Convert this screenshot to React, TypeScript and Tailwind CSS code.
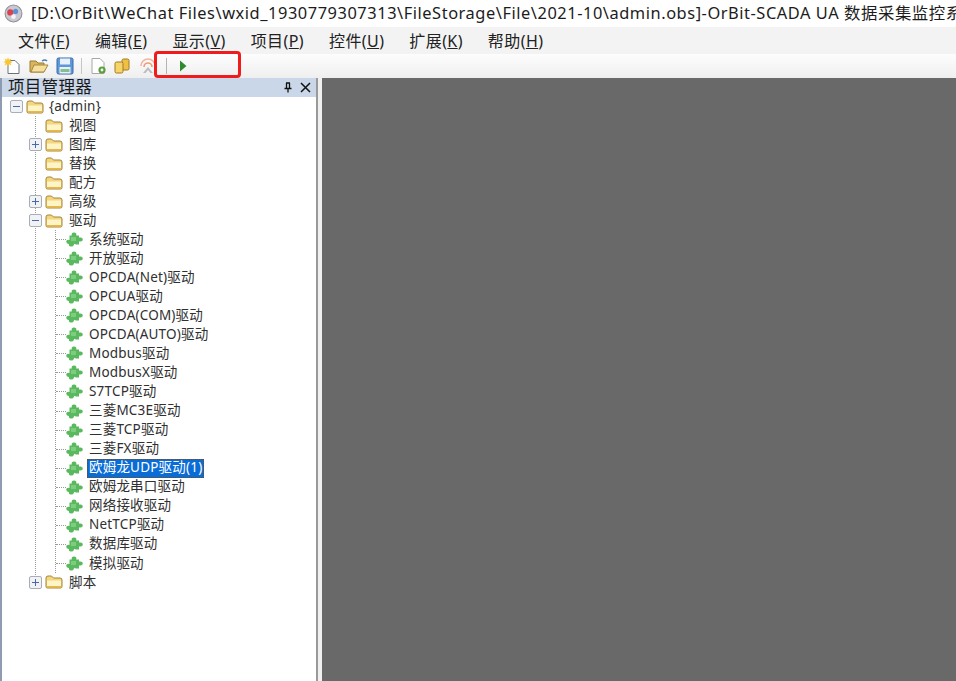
const FONT = "font-['Noto_Sans','Noto_Sans_CJK_SC',sans-serif]"

function Folder() {
  return (
    <svg width="18" height="14" viewBox="0 0 18 14" className="shrink-0">
      <path d="M1 3 Q1 1 3 1 H6.5 L8.5 3 H15 Q17 3 17 5 V11.5 Q17 13 15.5 13 H2.5 Q1 13 1 11.5 Z" fill="#f4d67e" stroke="#a5833a" strokeWidth="1" />
      <path d="M2 5.5 H16 V11 H2 Z" fill="#fff4c6" />
      <path d="M2 11.8 H16" stroke="#e6b848" strokeWidth="1.6" />
    </svg>
  )
}

function Puzzle() {
  return (
    <svg width="17" height="15" viewBox="0 0 17 15" className="shrink-0">
      <path d="M3.5 3.5 H5.8 Q5 0.4 8 0.4 Q11 0.4 10.2 3.5 H13 V5.6 Q16.8 4.8 16.8 7.6 Q16.8 10.2 13 9.4 V12.4 H9.6 Q8.8 11.2 8 12.4 Q7.4 14.8 4.8 14.6 Q2.4 14.2 3 12 Q0.2 12.2 0.2 9.6 Q0.4 7.4 3.5 8 Z" fill="#5ab85f" />
      <path d="M5 5 H10 V9 H5 Z" fill="#84d288" opacity="0.8" />
    </svg>
  )
}

function Expander({ open }: { open: boolean }) {
  return (
    <span className="relative z-10 flex h-[13px] w-[13px] shrink-0 items-center justify-center rounded-[2px] border border-[#a9aeb6] bg-[#f1f2f5]">
      <span className="absolute h-px w-[7px] bg-[#4a6aa5]" />
      {!open && <span className="absolute h-[7px] w-px bg-[#4a6aa5]" />}
    </span>
  )
}

function Row({ children }: { children: React.ReactNode }) {
  return <div className="relative flex h-[19.04px] items-center">{children}</div>
}

const folders: { name: string; expander?: boolean; open?: boolean }[] = [
  { name: '视图' },
  { name: '图库', expander: true },
  { name: '替换' },
  { name: '配方' },
  { name: '高级', expander: true },
  { name: '驱动', expander: true, open: true },
]

const drivers = [
  '系统驱动',
  '开放驱动',
  'OPCDA(Net)驱动',
  'OPCUA驱动',
  'OPCDA(COM)驱动',
  'OPCDA(AUTO)驱动',
  'Modbus驱动',
  'ModbusX驱动',
  'S7TCP驱动',
  '三菱MC3E驱动',
  '三菱TCP驱动',
  '三菱FX驱动',
  '欧姆龙UDP驱动(1)',
  '欧姆龙串口驱动',
  '网络接收驱动',
  'NetTCP驱动',
  '数据库驱动',
  '模拟驱动',
]

function FolderRow({ name, expander, open }: { name: string; expander?: boolean; open?: boolean }) {
  return (
    <Row>
      <span className="flex w-[13px] shrink-0 items-center justify-center">
        {expander ? <Expander open={!!open} /> : <span className="ml-[14px] w-[9px] border-t border-dotted border-[#9a9a9a]" />}
      </span>
      <span className="ml-[3px] flex items-center"><Folder /></span>
      <span className="ml-[6px] text-[#303030]">{name}</span>
    </Row>
  )
}

function Tree() {
  return (
    <div className={`${FONT} min-w-0 flex-1 bg-white pl-[8px] text-[13.5px] leading-none tracking-[0.2px]`}>
      <Row>
        <Expander open />
        <span className="ml-[3px] flex"><Folder /></span>
        <span className="ml-[5px] text-[#303030]">{'{admin}'}</span>
      </Row>
      <div className="relative ml-[19px]">
        <span className="absolute left-[6px] top-0 h-[467px] border-l border-dotted border-[#9a9a9a]" />
        {folders.map(f => <FolderRow key={f.name} {...f} />)}
        <div className="relative ml-[20px]">
          <span className="absolute left-[6px] top-0 h-[343px] border-l border-dotted border-[#9a9a9a]" />
          {drivers.map(d => (
            <Row key={d}>
              <span className="ml-[7px] w-[10px] shrink-0 border-t border-dotted border-[#9a9a9a]" />
              <Puzzle />
              <span className={d.startsWith('欧姆龙UDP')
                ? 'ml-[4px] flex h-[19px] items-center border border-dotted border-[#7a4a10] bg-[#0a6cd6] px-[1px] text-white'
                : 'ml-[6px] text-[#303030]'}>{d}</span>
            </Row>
          ))}
        </div>
        <FolderRow name="脚本" expander />
      </div>
    </div>
  )
}

function Toolbar() {
  return (
    <div className="relative flex h-[24px] items-center bg-gradient-to-b from-[#fdfdfd] to-[#efefef] pl-[3px]">
      <svg width="18" height="18" viewBox="0 0 18 18" className="shrink-0">
        <path d="M5 3.5 H12 L16 7.5 V16.5 H5 Z" fill="#fff" stroke="#6a7280" />
        <path d="M5 0.5 L6 2.8 L8.4 1.6 L7.4 4 L9.6 5 L7.4 6 L8.4 8.4 L6 7.2 L5 9.5 L4 7.2 L1.6 8.4 L2.6 6 L0.4 5 L2.6 4 L1.6 1.6 L4 2.8 Z" fill="#f9c531" />
      </svg>
      <svg width="20" height="16" viewBox="0 0 20 16" className="ml-[8px] shrink-0">
        <path d="M1 3 H7 L9 5 H15 V14 H1 Z" fill="#d9b65e" stroke="#9a7a34" />
        <path d="M2 14 L5 7 H19 L15 14 Z" fill="#f5df9e" stroke="#a8873c" />
        <path d="M13 3 Q16 0.8 18 3" stroke="#4a7fb8" fill="none" strokeWidth="1.4" />
      </svg>
      <svg width="18" height="18" viewBox="0 0 18 18" className="ml-[7px] shrink-0">
        <rect x="1" y="1" width="16" height="16" rx="1.5" fill="#5f97d8" stroke="#3a6aa8" />
        <rect x="4" y="1.5" width="10" height="6" fill="#e8f1fb" />
        <rect x="3.5" y="10" width="11" height="6.5" fill="#e8f1fb" />
        <rect x="4.5" y="12" width="9" height="3" fill="#86c08a" />
      </svg>
      <span className="ml-[7px] h-[16px] w-px bg-[#c6c6c6]" />
      <svg width="18" height="18" viewBox="0 0 18 18" className="ml-[7px] shrink-0">
        <path d="M3 1.5 H11 L15 5.5 V16.5 H3 Z" fill="#fff" stroke="#a8a8a8" />
        <circle cx="13" cy="13" r="3.6" fill="#5c9e3c" />
        <circle cx="13" cy="13" r="1.4" fill="#fff" />
      </svg>
      <svg width="18" height="18" viewBox="0 0 18 18" className="ml-[6px] shrink-0">
        <rect x="9" y="2" width="7" height="11" rx="1.5" fill="#f0c044" stroke="#a07c24" />
        <rect x="2" y="5" width="8" height="11" rx="1.5" fill="#f6d468" stroke="#a07c24" />
      </svg>
      <svg width="18" height="18" viewBox="0 0 18 18" className="ml-[8px] shrink-0">
        <path d="M2 9 A7 7 0 0 1 16 9" fill="none" stroke="#f3b49a" strokeWidth="1.6" />
        <path d="M5 10 A4 4 0 0 1 13 10" fill="none" stroke="#f09a78" strokeWidth="1.6" />
        <path d="M9 10 L4 16 H6.5 L9 13 L11.5 16 H14 Z" fill="#bcbcbc" />
      </svg>
      <span className="ml-[9px] h-[16px] w-px bg-[#b4b4b4]" />
      <svg width="8" height="12" viewBox="0 0 8 12" className="ml-[12px] shrink-0">
        <path d="M1 0.5 L7.5 6 L1 11.5 Z" fill="#2f8a2f" />
      </svg>
      <span className="absolute left-[154px] top-[-3px] h-[27px] w-[87px] rounded-[4px] border-[3px] border-[#ee1c1c]" />
    </div>
  )
}

const menus: [string, string][] = [
  ['文件', 'F'], ['编辑', 'E'], ['显示', 'V'], ['项目', 'P'], ['控件', 'U'], ['扩展', 'K'], ['帮助', 'H'],
]

export default function App() {
  return (
    <div className={`${FONT} flex h-[681px] w-[956px] flex-col overflow-hidden bg-white`}>
      <div className="flex h-[27px] shrink-0 items-center whitespace-nowrap pl-[4px] text-[16.4px] tracking-[0.55px] text-[#1c1c1c]">
        <svg width="19" height="19" viewBox="0 0 18 18" className="shrink-0">
          <circle cx="9" cy="9" r="8" fill="#c9c9cf" stroke="#8f8f98" />
          <circle cx="6" cy="8" r="3" fill="#d8434f" />
          <circle cx="11" cy="7" r="2.4" fill="#5d8fd8" />
          <circle cx="9" cy="12" r="2.2" fill="#f4f4f4" />
        </svg>
        <span className="ml-[8px]">[D:\OrBit\WeChat Files\wxid_1930779307313\FileStorage\File\2021-10\admin.obs]-OrBit-SCADA UA 数据采集监控系</span>
      </div>
      <div className="flex h-[27px] shrink-0 items-center gap-[25px] bg-[#f3f3f3] pl-[18px] text-[16px] tracking-[0.4px] text-[#222]">
        {menus.map(([label, key]) => (
          <span key={key}>{label}(<span className="underline">{key}</span>)</span>
        ))}
      </div>
      <Toolbar />
      <div className="flex min-h-0 flex-1">
        <div className="flex w-[318px] shrink-0 flex-col border-l-2 border-r-2 border-l-[#8f9bb0] border-r-[#9a9a9a]">
          <div className="flex h-[19px] shrink-0 items-center justify-between bg-[#c9d7e8] pl-[6px] pr-[5px] text-[16.5px] tracking-[0.3px] text-[#1a1a1a]">
            <span>项目管理器</span>
            <span className="flex items-center gap-[7px]">
              <svg width="10" height="11" viewBox="0 0 10 11">
                <path d="M3 1 H7 M3.5 1 V6 M6.5 1 V6 M1.5 6.5 H8.5 M5 6.5 V10.5" stroke="#111" strokeWidth="1.3" fill="none" />
              </svg>
              <svg width="11" height="11" viewBox="0 0 11 11">
                <path d="M1 1 L10 10 M10 1 L1 10" stroke="#111" strokeWidth="1.5" />
              </svg>
            </span>
          </div>
          <Tree />
        </div>
        <div className="w-[4px] shrink-0 bg-[#f0f0f0]" />
        <div className="flex-1 bg-[#696969]" />
      </div>
    </div>
  )
}
